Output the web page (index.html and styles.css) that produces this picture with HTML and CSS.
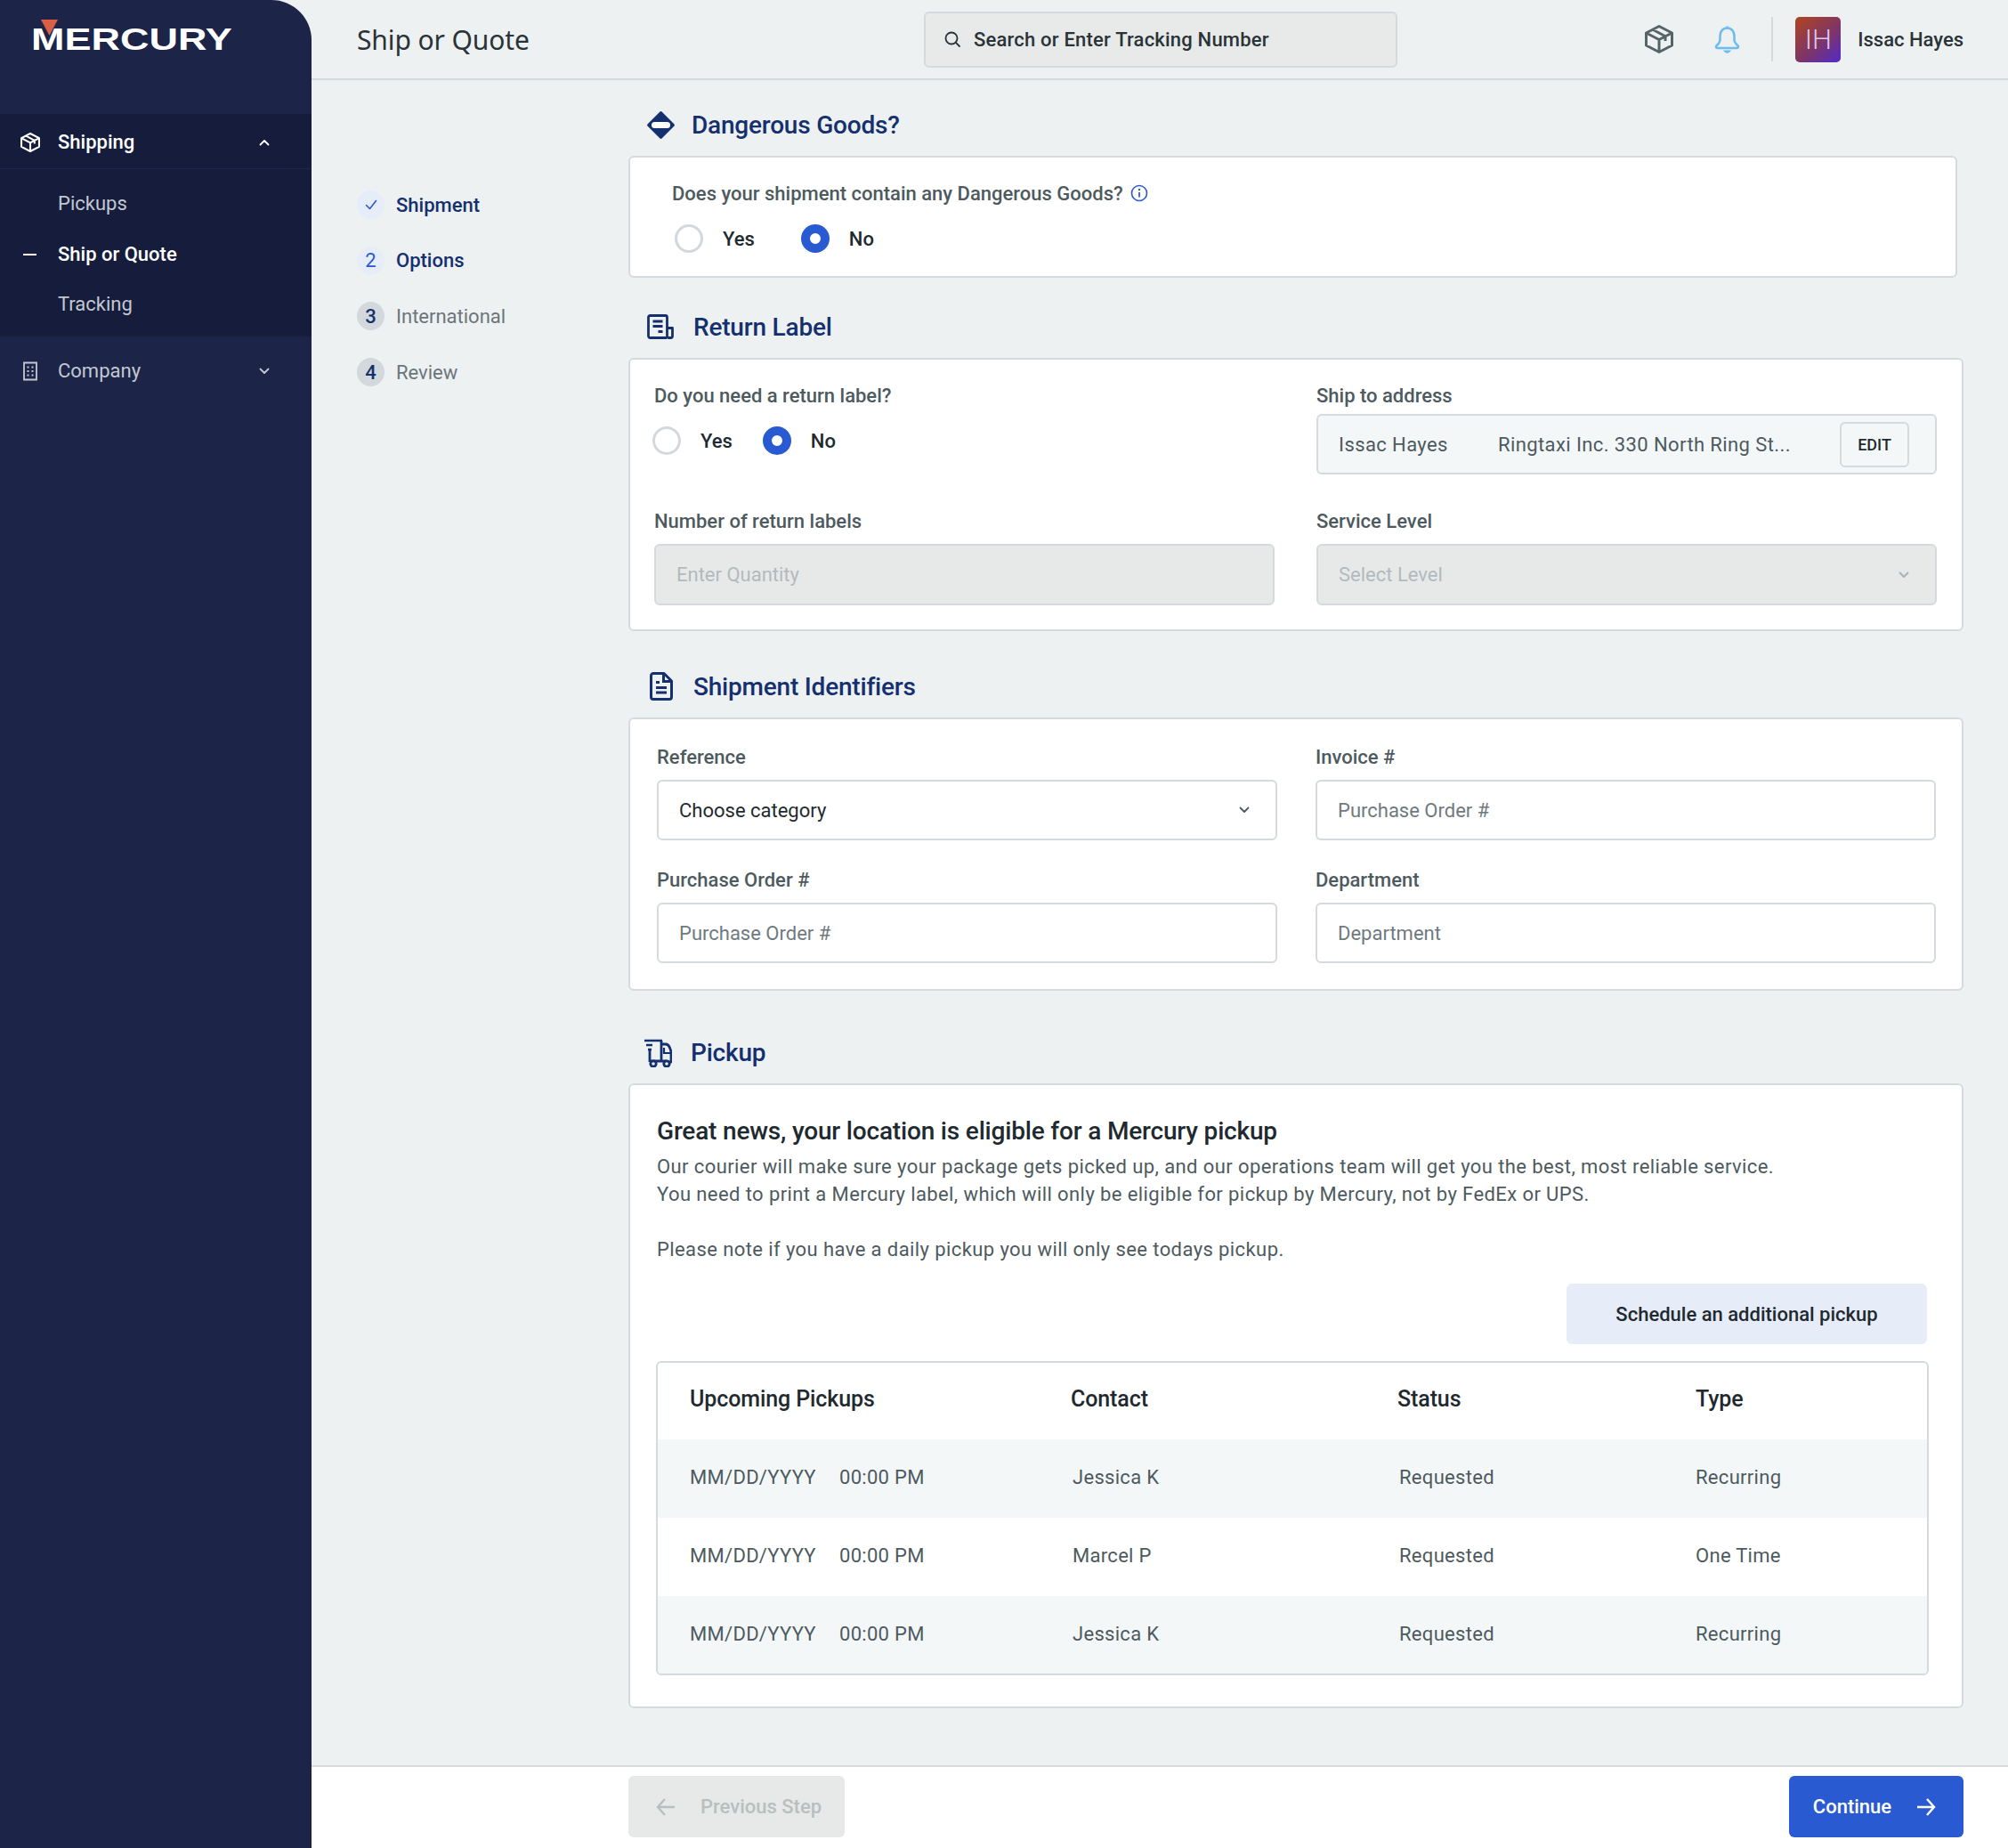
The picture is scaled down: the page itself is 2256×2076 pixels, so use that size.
FILE: index.html
```html
<!DOCTYPE html>
<html lang="en">
<head>
<meta charset="utf-8">
<title>Ship or Quote</title>
<link rel="stylesheet" href="styles.css">
</head>
<body>
<svg class="defs" width="0" height="0" aria-hidden="true">
  <symbol id="pkg" viewBox="0 0 32 32"><path d="M16 1.500 30.500 9V23L16 30.500 1.500 23V9ZM1.500 9 16 16.500 30.500 9M16 16.500V30.500M8.500 5 23 12.800V18" fill="none" stroke="currentColor" stroke-width="3" stroke-linejoin="round"/></symbol>
  <symbol id="chev" viewBox="0 0 12 8"><path d="M1.500 1.500 6 6l4.500-4.500" fill="none" stroke="currentColor" stroke-width="1.800" stroke-linecap="round" stroke-linejoin="round"/></symbol>
</svg>
<div class="app">
  <aside class="sidebar">
    <div class="logo">
      <svg class="logo-mark" viewBox="0 0 19 18"><path d="M0 0H19L9.500 18Z" fill="#d95f45"/></svg>
      <span class="logo-text">MERCURY</span>
    </div>
    <nav>
      <div class="nav-group">
        <div class="nav-head">
          <svg class="nav-icon"><use href="#pkg"/></svg>
          <span class="nav-name">Shipping</span>
          <svg class="nav-chev up"><use href="#chev"/></svg>
        </div>
        <div class="sub">
          <div class="sub-item">Pickups</div>
          <div class="sub-item current"><i class="dash"></i>Ship or Quote</div>
          <div class="sub-item">Tracking</div>
        </div>
      </div>
      <div class="nav-row">
        <svg class="nav-icon" viewBox="0 0 24 24"><path d="M5 2.500H19V21.500H5Z" fill="none" stroke="currentColor" stroke-width="1.800"/><path d="M8.500 6.500h2v2h-2zM13.500 6.500h2v2h-2zM8.500 11h2v2h-2zM13.500 11h2v2h-2zM8.500 15.500h2v2h-2zM13.500 15.500h2v2h-2z" fill="currentColor"/></svg>
        <span class="nav-name">Company</span>
        <svg class="nav-chev"><use href="#chev"/></svg>
      </div>
    </nav>
  </aside>

  <div class="right">
    <header class="topbar">
      <div class="page-title">Ship or Quote</div>
      <div class="search">
        <svg class="search-icon" viewBox="0 0 20 20"><circle cx="9" cy="9" r="6.500" fill="none" stroke="currentColor" stroke-width="1.800"/><path d="M14 14l4 4" stroke="currentColor" stroke-width="1.800" stroke-linecap="round"/></svg>
        <span>Search or Enter Tracking Number</span>
      </div>
      <div class="top-tools">
        <svg class="tool-box"><use href="#pkg"/></svg>
        <svg class="tool-bell" viewBox="0 0 29 31"><path d="M14.500 2.500C9.500 2.500 6.500 6.500 6.500 11v5c0 2.500-2 4.500-4 6.500-1 1-.5 2.500 1 2.500h22c1.500 0 2-1.500 1-2.500-2-2-4-4-4-6.500v-5c0-4.500-3-8.500-8-8.500Z" fill="none" stroke="currentColor" stroke-width="2.600" stroke-linejoin="round"/><path d="M14.500 0.500v2" stroke="currentColor" stroke-width="2.600"/><path d="M10 27.500h9c-1 2-3 3.200-4.500 3.200S11 29.500 10 27.500Z" fill="currentColor"/></svg>
        <i class="tool-div"></i>
        <div class="avatar">IH</div>
        <span class="user">Issac Hayes</span>
      </div>
    </header>

    <div class="content">
      <ol class="steps">
        <li class="step on"><span class="bubble"><svg viewBox="0 0 16 16" class="check"><path d="M2.500 8.500 6.500 12.500 13.500 3.500" fill="none" stroke="currentColor" stroke-width="1.600" stroke-linecap="round" stroke-linejoin="round"/></svg></span>Shipment</li>
        <li class="step on"><span class="bubble">2</span>Options</li>
        <li class="step"><span class="bubble">3</span>International</li>
        <li class="step"><span class="bubble">4</span>Review</li>
      </ol>

      <main class="form">
        <section class="sec sec-dg">
          <h2 class="sec-head">
            <svg class="sec-icon" viewBox="0 0 31 31"><path d="M15.500 2 29 15.500 15.500 29 2 15.500Z" fill="currentColor" stroke="currentColor" stroke-width="3.600" stroke-linejoin="round"/><rect x="5" y="12" width="21" height="7" rx="3.500" fill="#fff"/></svg>
            Dangerous Goods?
          </h2>
          <div class="card card-dg">
            <div class="label q">Does your shipment contain any Dangerous Goods?
              <svg class="info" viewBox="0 0 20 20"><circle cx="10" cy="10" r="8.500" fill="none" stroke="currentColor" stroke-width="1.600"/><path d="M10 9v5.500" stroke="currentColor" stroke-width="1.800"/><circle cx="10" cy="6" r="1.200" fill="currentColor"/></svg>
            </div>
            <div class="radios radios-dg">
              <label class="radio"><i class="dot"></i>Yes</label>
              <label class="radio"><i class="dot sel"></i>No</label>
            </div>
          </div>
        </section>

        <section class="sec sec-rl">
          <h2 class="sec-head head-b">
            <svg class="sec-icon" viewBox="0 0 31 28"><path d="M22 26.500H3.500a2 2 0 0 1-2-2V3.500a2 2 0 0 1 2-2h17a2 2 0 0 1 2 2v21a2 2 0 0 0 2 2h2a2 2 0 0 0 2-2V15.500h-7" fill="none" stroke="currentColor" stroke-width="2.800" stroke-linejoin="round"/><path d="M6.500 8h11M6.500 13.500h11M12.500 19.500h5" stroke="currentColor" stroke-width="2.800"/></svg>
            Return Label
          </h2>
          <div class="card card-rl">
            <div class="field">
              <div class="label">Do you need a return label?</div>
              <div class="radios radios-rl">
                <label class="radio"><i class="dot"></i>Yes</label>
                <label class="radio"><i class="dot sel"></i>No</label>
              </div>
            </div>
            <div class="field">
              <div class="label">Ship to address</div>
              <div class="control address">
                <span class="addr-name">Issac Hayes</span>
                <span class="addr-line">Ringtaxi Inc. 330 North Ring St...</span>
                <span class="edit">EDIT</span>
              </div>
            </div>
            <div class="field">
              <div class="label lbl-gap">Number of return labels</div>
              <div class="control disabled">Enter Quantity</div>
            </div>
            <div class="field">
              <div class="label lbl-gap">Service Level</div>
              <div class="control disabled select">Select Level<svg class="sel-chev"><use href="#chev"/></svg></div>
            </div>
          </div>
        </section>

        <section class="sec sec-si">
          <h2 class="sec-head head-b">
            <svg class="sec-icon doc" viewBox="0 0 26 32"><path d="M16 1.500H4a2.500 2.500 0 0 0-2.500 2.500v24A2.500 2.500 0 0 0 4 30.500h18a2.500 2.500 0 0 0 2.500-2.500V10Z" fill="none" stroke="currentColor" stroke-width="3" stroke-linejoin="round"/><path d="M15.500 2v8.500H24M7 11.500h4M7 17.500h12M7 23h12" fill="none" stroke="currentColor" stroke-width="3"/></svg>
            Shipment Identifiers
          </h2>
          <div class="card card-si">
            <div class="field">
              <div class="label lbl-gap">Reference</div>
              <div class="control select dark">Choose category<svg class="sel-chev"><use href="#chev"/></svg></div>
            </div>
            <div class="field">
              <div class="label lbl-gap">Invoice #</div>
              <div class="control ph">Purchase Order #</div>
            </div>
            <div class="field">
              <div class="label lbl-gap">Purchase Order #</div>
              <div class="control ph">Purchase Order #</div>
            </div>
            <div class="field">
              <div class="label lbl-gap">Department</div>
              <div class="control ph">Department</div>
            </div>
          </div>
        </section>

        <section class="sec sec-pu">
          <h2 class="sec-head head-c">
            <svg class="sec-icon cart" viewBox="8 6 31 33"><path d="M8 9h20M10 14h7M12 19h4" stroke="currentColor" stroke-width="2.600" fill="none"/><path d="M14 19V33M27 9V33M14 32h19" stroke="currentColor" stroke-width="2.800" fill="none"/><path d="M28 13h4c2.500 0 3.500 1.500 4.500 4 .8 2 1.500 4 1.500 6v10h-3" fill="none" stroke="currentColor" stroke-width="2.800" stroke-linejoin="round"/><path d="M30 17v6h8" fill="none" stroke="currentColor" stroke-width="2.200"/><circle cx="18" cy="35" r="3.200" fill="#eef1f2" stroke="currentColor" stroke-width="2.800"/><circle cx="33" cy="35" r="3.200" fill="#eef1f2" stroke="currentColor" stroke-width="2.800"/></svg>
            Pickup
          </h2>
          <div class="card card-pu">
            <h3 class="pu-title">Great news, your location is eligible for a Mercury pickup</h3>
            <p class="pu-text">Our courier will make sure your package gets picked up, and our operations team will get you the best, most reliable service.<br>You need to print a Mercury label, which will only be eligible for pickup by Mercury, not by FedEx or UPS.<br><br>Please note if you have a daily pickup you will only see todays pickup.</p>
            <div class="pu-actions"><button class="btn-soft" type="button">Schedule an additional pickup</button></div>
            <div class="table">
              <div class="row head">
                <span>Upcoming Pickups</span><span>Contact</span><span>Status</span><span>Type</span>
              </div>
              <div class="row odd">
                <span class="when"><b>MM/DD/YYYY</b><b>00:00 PM</b></span><span class="c2">Jessica K</span><span class="c2">Requested</span><span>Recurring</span>
              </div>
              <div class="row">
                <span class="when"><b>MM/DD/YYYY</b><b>00:00 PM</b></span><span class="c2">Marcel P</span><span class="c2">Requested</span><span>One Time</span>
              </div>
              <div class="row odd last">
                <span class="when"><b>MM/DD/YYYY</b><b>00:00 PM</b></span><span class="c2">Jessica K</span><span class="c2">Requested</span><span>Recurring</span>
              </div>
            </div>
          </div>
        </section>
      </main>
    </div>

    <footer class="footer">
      <button class="btn prev" type="button">
        <svg class="arrow" viewBox="0 0 22 22"><path d="M21 11H2M10 2 2 11l8 9" fill="none" stroke="currentColor" stroke-width="2.400"/></svg>
        Previous Step
      </button>
      <button class="btn next" type="button">
        Continue
        <svg class="arrow" viewBox="0 0 22 22"><path d="M1 11h19M12 2l8 9-8 9" fill="none" stroke="currentColor" stroke-width="2.400"/></svg>
      </button>
    </footer>
  </div>
</div>
</body>
</html>
```

FILE: styles.css
```css
* { box-sizing: border-box; }
html, body { margin: 0; padding: 0; }
body {
  font-family: Roboto, "Liberation Sans", sans-serif;
  font-size: 22px;
  color: #1f2a30;
  background: #eef1f2;
}
.defs { position: absolute; }
.app {
  display: grid;
  grid-template-columns: 350px 1fr;
  height: 2076px;
}

/* Sidebar */
.sidebar {
  background: #1c2548;
  border-top-right-radius: 45px;
  color: #c3c8d2;
}
.logo {
  position: relative;
  height: 128px;
  padding: 24px 0 0 35px;
}
.logo-text {
  display: block;
  font-family: "Liberation Sans", sans-serif;
  font-weight: 700;
  font-size: 35px;
  line-height: 40px;
  color: #fff;
  transform: scaleX(1.285);
  transform-origin: left top;
}
.logo-mark {
  position: absolute;
  left: 46px;
  top: 22px;
  width: 19px;
  height: 18px;
}
.nav-head, .nav-row {
  display: flex;
  align-items: center;
  padding: 0 47px 0 22px;
}
.nav-group { background: #161d3c; }
.nav-head {
  height: 62px;
  padding-top: 2px;
  color: #fff;
  border-bottom: 1px solid #1e2748;
  font-weight: 480;
}
.nav-row { height: 76px; padding-top: 2px; }
.nav-icon { width: 24px; height: 24px; flex: none; margin-right: 19px; }
.nav-head .nav-icon { width: 22px; height: 22px; margin: 0 20px 0 1px; }
.nav-name { flex: 1; }
.nav-chev { width: 12px; height: 8px; }
.nav-chev.up { transform: rotate(180deg); }
.sub { padding: 10px 0 8px; }
.sub-item {
  position: relative;
  height: 56.500px;
  line-height: 58px;
  padding-left: 65px;
}
.sub-item.current { color: #fff; font-weight: 480; }
.dash {
  position: absolute;
  left: 26px;
  top: 28px;
  width: 15px;
  height: 2px;
  background: #fff;
}

/* Topbar */
.right { display: flex; flex-direction: column; min-width: 0; }
.topbar {
  height: 90px;
  flex: none;
  display: flex;
  align-items: center;
  border-bottom: 2px solid #d5dade;
}
.page-title {
  flex: 0 0 688px;
  padding-left: 51px;
  font-family: "Noto Sans", sans-serif;
  font-size: 30px;
  letter-spacing: -.1px;
  color: #2a3338;
}
.search {
  width: 532px;
  height: 63px;
  display: flex;
  align-items: center;
  gap: 14px;
  padding-left: 20px;
  background: #e8eaea;
  border: 2px solid #d5dade;
  border-radius: 6px;
  font-weight: 480;
  letter-spacing: .2px;
  color: #2a3338;
}
.search-icon { width: 20px; height: 20px; }
.top-tools {
  margin-left: auto;
  padding-right: 50px;
  display: flex;
  align-items: center;
}
.tool-box { width: 32px; height: 32px; color: #566369; }
.tool-bell { width: 29px; height: 31px; margin-left: 46px; color: #6bbdf0; }
.tool-div { width: 2px; height: 50px; margin: 0 25px 0 35px; background: #d5dade; }
.avatar {
  width: 51px;
  height: 51px;
  border-radius: 5px;
  background: linear-gradient(140deg, #a8432a 10%, #7f3565 55%, #5a2db4 90%);
  color: #dcc8ee;
  font-size: 31px;
  text-align: center;
  line-height: 51px;
  font-weight: 300;
}
.user { margin-left: 19px; font-weight: 480; color: #2a3338; }

/* Content */
.content { flex: 1; display: flex; min-height: 0; }
.steps {
  flex: 0 0 356px;
  list-style: none;
  margin: 0;
  padding: 109px 0 0 51px;
}
.step {
  display: flex;
  align-items: center;
  height: 62.600px;
  color: #6b767b;
}
.step.on { color: #15306e; font-weight: 480; }
.bubble {
  flex: none;
  width: 31px;
  height: 32px;
  margin-right: 13px;
  border-radius: 50%;
  background: #d2d8dc;
  color: #15306e;
  display: flex;
  align-items: center;
  justify-content: center;
  font-weight: 480;
}
.on .bubble { background: #e6edf9; color: #2a5ad2; font-weight: 400; }
.check { width: 16px; height: 16px; }

.form { flex: 1; min-width: 0; padding: 28px 50px 0 0; }
.sec-head {
  display: flex;
  align-items: center;
  height: 44px;
  margin: 0 0 13px;
  padding-left: 21px;
  font-size: 28px;
  font-weight: 490;
  letter-spacing: -.2px;
  color: #15306e;
}
.sec-icon { width: 31px; height: 31px; flex: none; margin-right: 19px; }
.head-b .sec-icon { width: 31px; height: 28px; margin-right: 21px; }
.head-b .sec-icon.doc { width: 26px; height: 32px; margin-left: 3px; margin-right: 23px; }
.head-c { padding-left: 18px; }
.head-c .sec-icon { width: 31px; height: 33px; margin-right: 21px; }
.sec-rl { margin-top: 33px; }
.sec-si { margin-top: 40px; }
.sec-pu { margin-top: 47px; }

.card {
  background: #fff;
  border: 2px solid #d5dade;
  border-radius: 6px;
}
.card-dg { width: 1493px; height: 137px; padding: 26px 47px 0; }
.card-rl {
  display: grid;
  grid-template-columns: 1fr 1fr;
  column-gap: 47px;
  padding: 26px 28px 27px 27px;
}
.card-si {
  display: grid;
  grid-template-columns: 1fr 1fr;
  column-gap: 43px;
  row-gap: 30px;
  padding: 28px 29px 29px 30px;
}
.card-pu { padding: 34px 37px 35px 30px; }

.label {
  height: 30px;
  line-height: 30px;
  font-weight: 480;
  color: #4d5a60;
}
.lbl-gap { margin-bottom: 10px; }
.card-rl .field:nth-child(n+3) { margin-top: 38px; }
.card-rl .field:nth-child(-n+2) .label { margin-bottom: 5px; }
.q { display: flex; align-items: center; gap: 8px; }
.info { width: 20px; height: 20px; color: #2a5ad2; margin-top: -3px; }

.radios { display: flex; align-items: center; }
.radios-dg { margin: 19px 0 0 3px; gap: 52px; }
.radios-rl { margin: 19px 0 0 -2px; gap: 34px; }
.radio {
  display: flex;
  align-items: center;
  height: 32px;
  gap: 22px;
  font-weight: 480;
  color: #1f2a30;
}
.dot {
  width: 32px;
  height: 32px;
  border-radius: 50%;
  border: 3px solid #d2d8dc;
  background: #fff;
}
.dot.sel { border: 10px solid #2a5ad2; }

.control {
  height: 68px;
  display: flex;
  align-items: center;
  padding: 0 23px;
  background: #fff;
  border: 2px solid #d5dade;
  border-radius: 6px;
  color: #6f7a7f;
}
.address { background: #f4f7f8; color: #4d5a60; padding-right: 29px; letter-spacing: .4px; }
.addr-name { width: 179px; flex: none; }
.addr-line { flex: 1; }
.edit {
  width: 78px;
  height: 51px;
  display: flex;
  align-items: center;
  justify-content: center;
  background: #f4f7f8;
  border: 2px solid #d5dade;
  border-radius: 6px;
  font-size: 18px;
  font-weight: 500;
  letter-spacing: 0;
  color: #1f2a30;
}
.disabled { background: #e7e9e9; color: #b3babd; height: 69px; }
.select { justify-content: space-between; padding-right: 29px; }
.sel-chev { width: 12px; height: 8px; color: #4d5a60; }
.disabled .sel-chev { color: #a9b1b4; }
.dark { color: #1f2a30; }

.pu-title { margin: 0; font-size: 28px; line-height: 36px; font-weight: 490; letter-spacing: -.18px; color: #1f2a30; }
.pu-text { margin: 6px 0 0; line-height: 31px; color: #4d5a60; letter-spacing: .41px; }
.pu-actions { display: flex; justify-content: flex-end; margin: 23px 2px 0 0; }
.btn-soft {
  width: 405px;
  height: 68px;
  border: 0;
  border-radius: 6px;
  background: #e6edf9;
  font: 480 22px Roboto, sans-serif;
  color: #1f2a30;
}
.table {
  margin: 19px 0 0 -1px;
  border: 2px solid #d5dade;
  border-radius: 6px;
  overflow: hidden;
}
.row {
  display: grid;
  grid-template-columns: 428px 367px 335px 1fr;
  align-items: center;
  height: 88px;
  padding: 0 0 4px 36px;
  color: #4d5a60;
  letter-spacing: .3px;
}
.row.head { font-size: 25px; font-weight: 480; color: #1f2a30; letter-spacing: -.1px; height: 86px; padding-bottom: 6px; }
.row.odd { background: #f4f7f8; }
.row.last { height: 87px; padding-bottom: 3px; }
.c2 { padding-left: 2px; }
.when { display: flex; }
.when b { font-weight: 400; }
.when b:first-child { width: 168px; }

/* Footer */
.footer {
  height: 93px;
  flex: none;
  display: flex;
  justify-content: space-between;
  padding: 10px 50px 10px 356px;
  background: #fff;
  border-top: 2px solid #d5dade;
}
.btn {
  height: 69px;
  display: flex;
  align-items: center;
  justify-content: center;
  border: 0;
  border-radius: 6px;
  font: 480 22px Roboto, sans-serif;
}
.arrow { width: 22px; height: 22px; }
.prev { width: 243px; gap: 28px; padding-left: 11px; background: #e7e9e9; color: #b8bfbf; }
.next { width: 196px; gap: 28px; padding-right: 10px; background: #2a5ad2; color: #fff; }
```
